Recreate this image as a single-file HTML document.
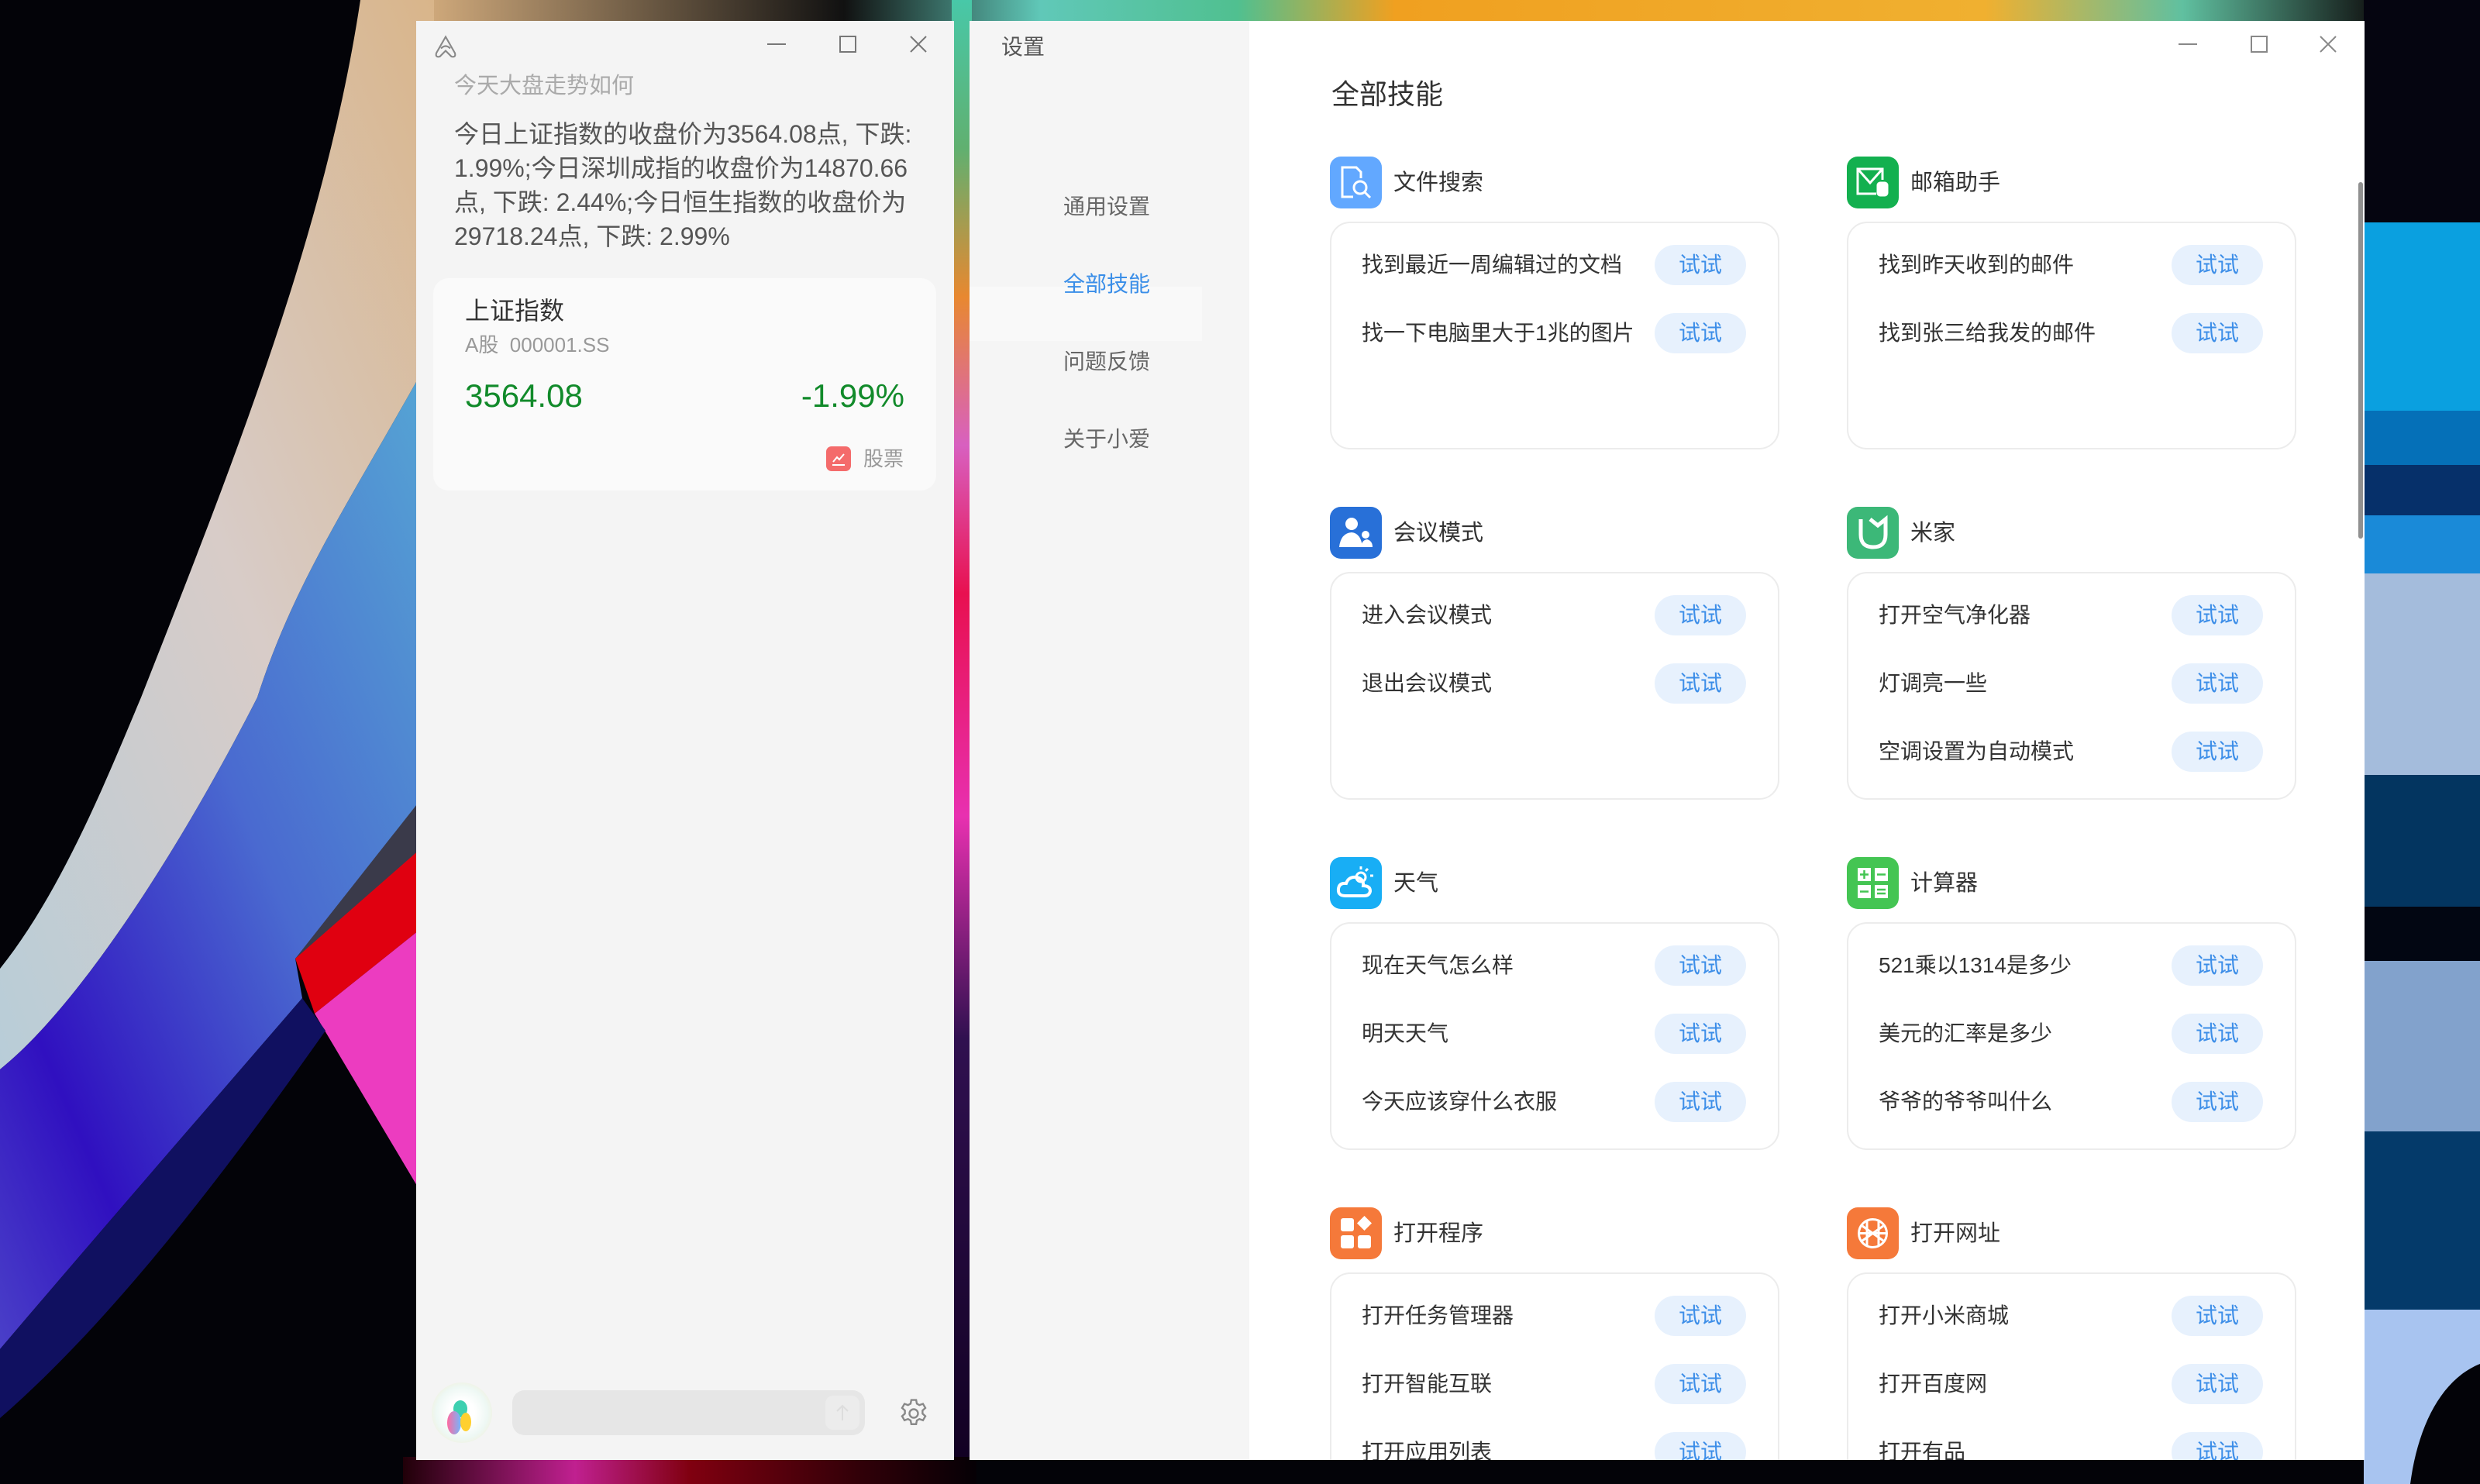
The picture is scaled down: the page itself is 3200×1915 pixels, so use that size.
<!DOCTYPE html>
<html><head><meta charset="utf-8">
<style>
*{margin:0;padding:0;box-sizing:border-box}
body{width:3200px;height:1915px;overflow:hidden;position:relative;background:#000;font-family:"Liberation Sans","Noto Sans CJK SC",sans-serif}
.abs{position:absolute}
.win{position:absolute;overflow:hidden}
.t{position:absolute;white-space:nowrap}
.card{position:absolute;background:#fff;border:2px solid #ececec;border-radius:26px}
.btn{position:absolute;width:118px;height:52px;border-radius:26px;background:#e7f1fd;color:#3d8ee8;font-size:28px;line-height:52px;text-align:center}
.item{position:absolute;font-size:28px;color:#333;white-space:nowrap;line-height:40px}
.ic{position:absolute;width:67px;height:67px;border-radius:14px}
.sec{position:absolute;font-size:29px;color:#333;line-height:40px}
</style></head><body>
<svg class="abs" style="left:0;top:0" width="3200" height="1915">
<defs>
<linearGradient id="cream" x1="1" y1="0" x2="0" y2="1"><stop offset="0" stop-color="#d9b58a"/><stop offset=".5" stop-color="#d8ccc8"/><stop offset="1" stop-color="#b8cdd8"/></linearGradient>
<linearGradient id="blue" x1="1" y1="0" x2="0" y2="1"><stop offset="0" stop-color="#56a8d4"/><stop offset=".45" stop-color="#4a6ad0"/><stop offset=".8" stop-color="#3010c0"/><stop offset="1" stop-color="#4a40c8"/></linearGradient>
<linearGradient id="gap" x1="0" y1="0" x2="0" y2="1"><stop offset="0" stop-color="#48c8a8"/><stop offset=".1" stop-color="#60b070"/><stop offset=".2" stop-color="#e88830"/><stop offset=".3" stop-color="#d860c0"/><stop offset=".4" stop-color="#e81050"/><stop offset=".55" stop-color="#e830b0"/><stop offset=".7" stop-color="#301050"/><stop offset="1" stop-color="#100020"/></linearGradient>
<linearGradient id="top" x1="0" y1="0" x2="1" y2="0"><stop offset="0" stop-color="#d8b080"/><stop offset=".22" stop-color="#111"/><stop offset=".32" stop-color="#60c8b8"/><stop offset=".42" stop-color="#50c090"/><stop offset=".5" stop-color="#f0a020"/><stop offset=".8" stop-color="#f0b030"/><stop offset=".9" stop-color="#60c0a0"/><stop offset="1" stop-color="#101010"/></linearGradient>
<linearGradient id="bot" x1="0" y1="0" x2="1" y2="0"><stop offset="0" stop-color="#200008"/><stop offset=".3" stop-color="#c02090"/><stop offset=".5" stop-color="#800010"/><stop offset=".8" stop-color="#300008"/><stop offset="1" stop-color="#050005"/></linearGradient>
</defs>
<rect width="3200" height="1915" fill="#030308"/>
<rect x="530" y="0" width="2540" height="28" fill="url(#top)"/>
<path d="M465 0 L560 0 L560 452 C450 650 380 750 332 900 C230 1100 100 1300 0 1380 L0 1250 C80 1150 140 1000 182 900 C300 600 420 300 465 0Z" fill="url(#cream)"/>
<path d="M560 452 L560 1062 L381 1237 L390 1288 C250 1450 120 1600 0 1741 L0 1380 C100 1300 230 1100 332 900 C380 750 450 650 560 452Z" fill="url(#blue)"/>
<path d="M560 1010 L560 1085 L381 1237Z" fill="#3a3a4a"/>
<path d="M381 1237 L560 1080 L560 1185 L406 1308Z" fill="#e00010"/>
<path d="M406 1308 L560 1185 L560 1567Z" fill="#ec3cc0"/>
<path d="M0 1741 C120 1600 250 1450 390 1288 L420 1330 C300 1500 150 1700 0 1830Z" fill="#101060"/>
<rect x="1228" y="0" width="26" height="1915" fill="url(#gap)"/>
<rect x="520" y="1880" width="740" height="35" fill="url(#bot)"/>
<rect x="3050" y="0" width="150" height="287" fill="#050510"/>
<rect x="3050" y="287" width="150" height="243" fill="#0aa0e0"/>
<rect x="3050" y="530" width="150" height="70" fill="#0570b8"/>
<rect x="3050" y="600" width="150" height="65" fill="#06306a"/>
<rect x="3050" y="665" width="150" height="75" fill="#1a8ad8"/>
<rect x="3050" y="740" width="150" height="260" fill="#a4bcdc"/>
<rect x="3050" y="1000" width="150" height="170" fill="#033560"/>
<rect x="3050" y="1170" width="150" height="70" fill="#020612"/>
<rect x="3050" y="1240" width="150" height="220" fill="#82a2cc"/>
<rect x="3050" y="1460" width="150" height="230" fill="#043a6a"/>
<path d="M3050 1690 L3200 1690 L3200 1760 C3150 1780 3120 1840 3110 1915 L3050 1915Z" fill="#a8c4f0"/>
</svg>

<!-- LEFT WINDOW -->
<div class="win" style="left:537px;top:27px;width:694px;height:1857px;background:#f4f4f4">
  <svg class="abs" style="left:20px;top:16px" width="36" height="36" viewBox="0 0 24 24" fill="none" stroke="#888" stroke-width="1.4"><path d="M12 3 L4 17 Q3 21 7 20 L12 15 L17 20 Q21 21 20 17 Z"/><path d="M8 13 Q12 9 16 13"/></svg>
  <svg class="abs" style="left:450px;top:16px" width="30" height="30"><line x1="3" y1="14" x2="27" y2="14" stroke="#777" stroke-width="2"/></svg>
  <svg class="abs" style="left:542px;top:16px" width="30" height="30"><rect x="5" y="4" width="20" height="20" fill="none" stroke="#777" stroke-width="2"/></svg>
  <svg class="abs" style="left:633px;top:16px" width="30" height="30"><path d="M5 4 L25 24 M25 4 L5 24" stroke="#777" stroke-width="2"/></svg>
  <div class="t" style="left:49px;top:64px;font-size:29px;color:#aaa;line-height:40px">今天大盘走势如何</div>
  <div class="abs" style="left:49px;top:124px;width:600px;font-size:32px;color:#555;line-height:44px">今日上证指数的收盘价为3564.08点, 下跌: 1.99%;今日深圳成指的收盘价为14870.66点, 下跌: 2.44%;今日恒生指数的收盘价为29718.24点, 下跌: 2.99%</div>
  <div class="abs" style="left:22px;top:332px;width:649px;height:274px;background:#fafafa;border-radius:20px">
    <div class="t" style="left:41px;top:20px;font-size:32px;color:#333;line-height:44px">上证指数</div>
    <div class="t" style="left:41px;top:68px;font-size:26px;color:#999;line-height:36px">A股&nbsp;&nbsp;000001.SS</div>
    <div class="t" style="left:41px;top:126px;font-size:42px;color:#118a2a;line-height:52px">3564.08</div>
    <div class="t" style="right:41px;top:126px;font-size:42px;color:#118a2a;line-height:52px">-1.99%</div>
    <div class="abs" style="left:507px;top:217px;width:32px;height:32px;border-radius:7px;background:#f46b6b"></div>
    <svg class="abs" style="left:511px;top:221px" width="24" height="24"><path d="M4 20 L20 20 M5 16 L10 10 L13 13 L19 6" stroke="#fff" stroke-width="2" fill="none"/></svg>
    <div class="t" style="left:555px;top:213px;font-size:26px;color:#999;line-height:40px">股票</div>
  </div>
  <div class="abs" style="left:20px;top:1757px;width:78px;height:78px;border-radius:50%;background:radial-gradient(circle at 50% 50%,#fff 30%,#eef8f4 60%,#f2e8c8 100%)"></div>
  <div class="abs" style="left:48px;top:1780px;width:18px;height:22px;border-radius:50%;background:#3dd0b0"></div>
  <div class="abs" style="left:40px;top:1794px;width:18px;height:30px;border-radius:50%;background:linear-gradient(90deg,#ff6aa0,#70b8ff)"></div>
  <div class="abs" style="left:57px;top:1796px;width:14px;height:24px;border-radius:50%;background:#ffd030"></div>
  <div class="abs" style="left:124px;top:1767px;width:455px;height:58px;border-radius:16px;background:#e6e6e6"></div>
  <div class="abs" style="left:528px;top:1774px;width:44px;height:44px;border-radius:10px;background:#ececec"></div>
  <svg class="abs" style="left:536px;top:1782px" width="28" height="28"><path d="M14 24 L14 5 M7 12 L14 5 L21 12" stroke="#ddd" stroke-width="2" fill="none"/></svg>
  <svg class="abs" style="left:620px;top:1775px" width="44" height="44" viewBox="0 0 24 24" fill="none" stroke="#888" stroke-width="1.3"><circle cx="12" cy="12" r="3"/><path d="M10.3 2.5h3.4l.5 2.6 1.8 1 2.5-.9 1.7 2.9-2 1.8v2.2l2 1.8-1.7 2.9-2.5-.9-1.8 1-.5 2.6h-3.4l-.5-2.6-1.8-1-2.5.9-1.7-2.9 2-1.8v-2.2l-2-1.8 1.7-2.9 2.5.9 1.8-1z"/></svg>
</div>

<!-- RIGHT WINDOW -->
<div class="win" style="left:1251px;top:27px;width:1800px;height:1857px;background:#fff">
  <div class="abs" style="left:0;top:0;width:361px;height:1857px;background:#f5f5f5"></div>
  <div class="abs" style="left:0;top:343px;width:300px;height:70px;background:#f9f9f9"></div>
  <div class="t" style="left:41px;top:14px;font-size:28px;color:#555;line-height:40px">设置</div>
  <div class="t" style="left:121px;top:220px;font-size:28px;color:#666;line-height:40px">通用设置</div>
  <div class="t" style="left:121px;top:320px;font-size:28px;color:#3a8ee8;line-height:40px">全部技能</div>
  <div class="t" style="left:121px;top:420px;font-size:28px;color:#666;line-height:40px">问题反馈</div>
  <div class="t" style="left:121px;top:520px;font-size:28px;color:#666;line-height:40px">关于小爱</div>
  <svg class="abs" style="left:1557px;top:16px" width="30" height="30"><line x1="3" y1="14" x2="27" y2="14" stroke="#888" stroke-width="2"/></svg>
  <svg class="abs" style="left:1649px;top:16px" width="30" height="30"><rect x="5" y="4" width="20" height="20" fill="none" stroke="#888" stroke-width="2"/></svg>
  <svg class="abs" style="left:1738px;top:16px" width="30" height="30"><path d="M5 4 L25 24 M25 4 L5 24" stroke="#888" stroke-width="2"/></svg>
  <div class="abs" style="left:1792px;top:208px;width:6px;height:460px;background:#909090;border-radius:3px"></div>
  <div class="t" style="left:467px;top:72px;font-size:36px;color:#333;line-height:46px">全部技能</div>

  <div class="abs" style="left:465px;top:175px;width:1300px;height:1700px">
    <div class="ic" style="left:0;top:0;background:#62a8ff"></div>
    <svg class="abs" style="left:0;top:0" width="67" height="67" viewBox="0 0 67 67" fill="none" stroke="#fff" stroke-width="3"><path d="M30 52 H16 V14 H34 L40 20 V28"/><circle cx="39" cy="40" r="8"/><line x1="45" y1="46" x2="52" y2="53"/></svg>
    <div class="sec" style="left:82px;top:14px">文件搜索</div>
    <div class="card" style="left:0;top:84px;width:580px;height:294px">
      <div class="item" style="left:39px;top:34px">找到最近一周编辑过的文档</div><div class="btn" style="left:417px;top:28px">试试</div>
      <div class="item" style="left:39px;top:122px">找一下电脑里大于1兆的图片</div><div class="btn" style="left:417px;top:116px">试试</div>
    </div>
    <div class="ic" style="left:667px;top:0;background:#13b04f"></div>
    <svg class="abs" style="left:667px;top:0" width="67" height="67" viewBox="0 0 67 67" fill="none" stroke="#fff" stroke-width="3"><path d="M38 48 H14 V16 H46 V30"/><path d="M14 16 L30 34 L46 16"/><rect x="40" y="34" width="12" height="16" rx="3" fill="#fff"/></svg>
    <div class="sec" style="left:749px;top:14px">邮箱助手</div>
    <div class="card" style="left:667px;top:84px;width:580px;height:294px">
      <div class="item" style="left:39px;top:34px">找到昨天收到的邮件</div><div class="btn" style="left:417px;top:28px">试试</div>
      <div class="item" style="left:39px;top:122px">找到张三给我发的邮件</div><div class="btn" style="left:417px;top:116px">试试</div>
    </div>
    <div class="ic" style="left:0;top:452px;background:#2870d8"></div>
    <svg class="abs" style="left:0;top:452px" width="67" height="67" viewBox="0 0 67 67" fill="#fff"><circle cx="28" cy="22" r="8"/><path d="M12 52 Q14 34 28 33 Q40 34 42 52Z"/><circle cx="46" cy="36" r="5"/><path d="M40 52 Q41 43 48 42 Q55 44 55 52Z"/></svg>
    <div class="sec" style="left:82px;top:466px">会议模式</div>
    <div class="card" style="left:0;top:536px;width:580px;height:294px">
      <div class="item" style="left:39px;top:34px">进入会议模式</div><div class="btn" style="left:417px;top:28px">试试</div>
      <div class="item" style="left:39px;top:122px">退出会议模式</div><div class="btn" style="left:417px;top:116px">试试</div>
    </div>
    <div class="ic" style="left:667px;top:452px;background:#3cb878"></div>
    <svg class="abs" style="left:667px;top:452px" width="67" height="67" viewBox="0 0 67 67" fill="none" stroke="#fff" stroke-width="5"><path d="M18 16 L18 36 Q18 52 34 52 Q50 52 50 36 L50 16 L40 24 L30 16"/></svg>
    <div class="sec" style="left:749px;top:466px">米家</div>
    <div class="card" style="left:667px;top:536px;width:580px;height:294px">
      <div class="item" style="left:39px;top:34px">打开空气净化器</div><div class="btn" style="left:417px;top:28px">试试</div>
      <div class="item" style="left:39px;top:122px">灯调亮一些</div><div class="btn" style="left:417px;top:116px">试试</div>
      <div class="item" style="left:39px;top:210px">空调设置为自动模式</div><div class="btn" style="left:417px;top:204px">试试</div>
    </div>
    <div class="ic" style="left:0;top:904px;background:#18aef5"></div>
    <svg class="abs" style="left:0;top:904px" width="67" height="67" viewBox="0 0 67 67" fill="none" stroke="#fff" stroke-width="4"><path d="M20 50 Q10 50 11 41 Q12 33 21 34 Q24 25 34 26 Q44 28 43 37 Q52 37 52 44 Q51 50 44 50Z"/><circle cx="40" cy="26" r="6" stroke-width="3"/><path d="M40 12v4M52 24h4M49 15l-3 3" stroke-width="3"/></svg>
    <div class="sec" style="left:82px;top:918px">天气</div>
    <div class="card" style="left:0;top:988px;width:580px;height:294px">
      <div class="item" style="left:39px;top:34px">现在天气怎么样</div><div class="btn" style="left:417px;top:28px">试试</div>
      <div class="item" style="left:39px;top:122px">明天天气</div><div class="btn" style="left:417px;top:116px">试试</div>
      <div class="item" style="left:39px;top:210px">今天应该穿什么衣服</div><div class="btn" style="left:417px;top:204px">试试</div>
    </div>
    <div class="ic" style="left:667px;top:904px;background:#44c553"></div>
    <svg class="abs" style="left:667px;top:904px" width="67" height="67" viewBox="0 0 67 67"><rect x="14" y="14" width="17" height="17" fill="#fff"/><rect x="36" y="14" width="17" height="17" fill="#fff"/><rect x="14" y="36" width="17" height="17" fill="#fff"/><rect x="36" y="36" width="17" height="17" fill="#fff"/><path d="M22.5 17v11M17 22.5h11M39 22.5h11M17 44.5h11M39 42h11M39 47h11" stroke="#44c553" stroke-width="2.5"/></svg>
    <div class="sec" style="left:749px;top:918px">计算器</div>
    <div class="card" style="left:667px;top:988px;width:580px;height:294px">
      <div class="item" style="left:39px;top:34px">521乘以1314是多少</div><div class="btn" style="left:417px;top:28px">试试</div>
      <div class="item" style="left:39px;top:122px">美元的汇率是多少</div><div class="btn" style="left:417px;top:116px">试试</div>
      <div class="item" style="left:39px;top:210px">爷爷的爷爷叫什么</div><div class="btn" style="left:417px;top:204px">试试</div>
    </div>
    <div class="ic" style="left:0;top:1356px;background:#f5793a"></div>
    <svg class="abs" style="left:0;top:1356px" width="67" height="67" viewBox="0 0 67 67" fill="#fff"><rect x="14" y="14" width="17" height="17" rx="3"/><rect x="14" y="36" width="17" height="17" rx="3"/><rect x="36" y="36" width="17" height="17" rx="3"/><path d="M44.5 11 L54 20.5 L44.5 30 L35 20.5Z"/></svg>
    <div class="sec" style="left:82px;top:1370px">打开程序</div>
    <div class="card" style="left:0;top:1440px;width:580px;height:294px">
      <div class="item" style="left:39px;top:34px">打开任务管理器</div><div class="btn" style="left:417px;top:28px">试试</div>
      <div class="item" style="left:39px;top:122px">打开智能互联</div><div class="btn" style="left:417px;top:116px">试试</div>
      <div class="item" style="left:39px;top:210px">打开应用列表</div><div class="btn" style="left:417px;top:204px">试试</div>
    </div>
    <div class="ic" style="left:667px;top:1356px;background:#f5793a"></div>
    <svg class="abs" style="left:667px;top:1356px" width="67" height="67" viewBox="0 0 67 67" fill="none" stroke="#fff" stroke-width="3"><circle cx="33.5" cy="33.5" r="18"/><path d="M20 24 L47 43 M20 43 L47 24 M26 17 L26 50 M41 17 L41 50 M16 33.5 H51"/></svg>
    <div class="sec" style="left:749px;top:1370px">打开网址</div>
    <div class="card" style="left:667px;top:1440px;width:580px;height:294px">
      <div class="item" style="left:39px;top:34px">打开小米商城</div><div class="btn" style="left:417px;top:28px">试试</div>
      <div class="item" style="left:39px;top:122px">打开百度网</div><div class="btn" style="left:417px;top:116px">试试</div>
      <div class="item" style="left:39px;top:210px">打开有品</div><div class="btn" style="left:417px;top:204px">试试</div>
    </div>
  </div>
</div>
</body></html>
